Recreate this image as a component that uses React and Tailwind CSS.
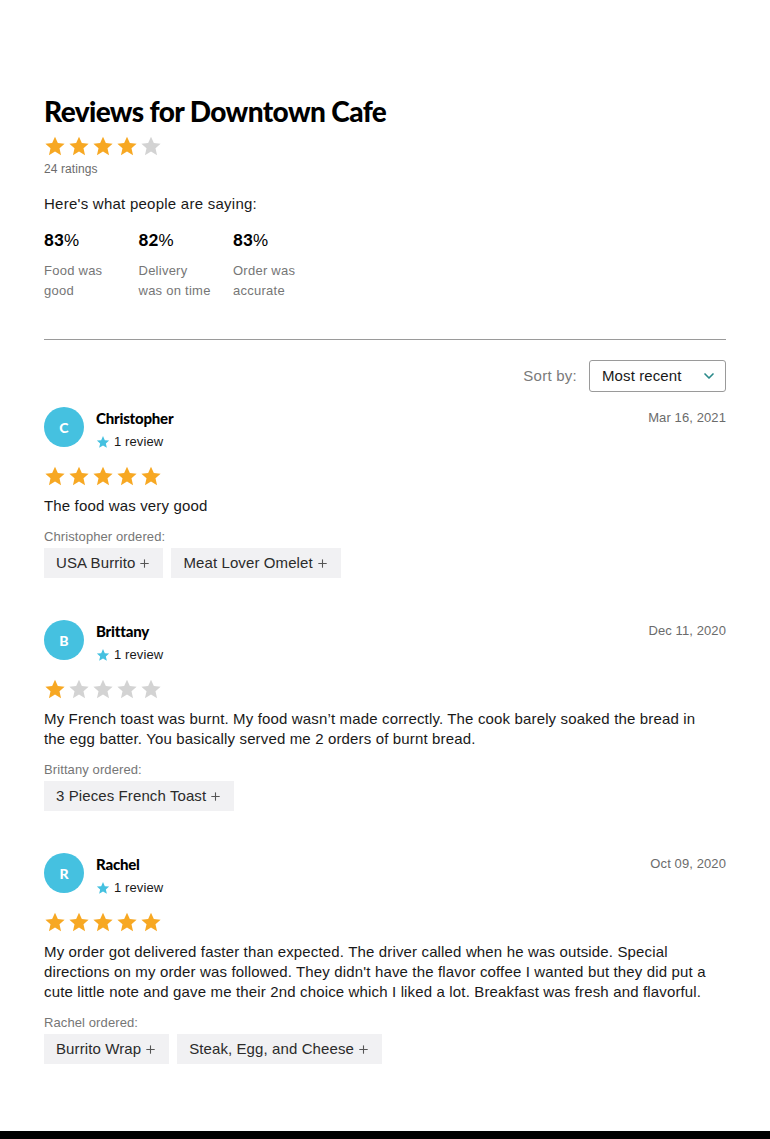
import React from 'react';
import { ChevronDown, Plus } from 'lucide-react';

const reviews = [
  {
    name: 'Christopher',
    date: 'Mar 16, 2021',
    rating: 5,
    text: 'The food was very good',
    items: ['USA Burrito', 'Meat Lover Omelet'],
  },
  {
    name: 'Brittany',
    date: 'Dec 11, 2020',
    rating: 1,
    text: 'My French toast was burnt. My food wasn’t made correctly. The cook barely soaked the bread in the egg batter. You basically served me 2 orders of burnt bread.',
    items: ['3 Pieces French Toast'],
  },
  {
    name: 'Rachel',
    date: 'Oct 09, 2020',
    rating: 5,
    text: "My order got delivered faster than expected. The driver called when he was outside. Special directions on my order was followed. They didn't have the flavor coffee I wanted but they did put a cute little note and gave me their 2nd choice which I liked a lot. Breakfast was fresh and flavorful.",
    items: ['Burrito Wrap', 'Steak, Egg, and Cheese'],
  },
];

const Star = ({ filled, size = 22, color }) => (
  <svg width={size} height={size} viewBox="0 0 24 24">
    <path
      d="M12 1.8l3.1 7 7.4.7-5.6 5 1.7 7.5L12 18.1 5.4 22l1.7-7.5-5.6-5 7.4-.7z"
      fill={color || (filled ? '#f7a823' : '#d3d3d3')}
    />
  </svg>
);

const Stars = ({ value }) => (
  <div className="flex gap-[2px]">
    {[1, 2, 3, 4, 5].map((i) => (
      <Star key={i} filled={i <= value} />
    ))}
  </div>
);

const stats = [
  { pct: '83', label: ['Food was', 'good'] },
  { pct: '82', label: ['Delivery', 'was on time'] },
  { pct: '83', label: ['Order was', 'accurate'] },
];

const heading = { fontFamily: 'Lato, "Liberation Sans", sans-serif' };

export default function App() {
  return (
    <div
      className="h-[1139px] overflow-hidden bg-white flex flex-col tracking-[0.1px]"
      style={{ fontFamily: '"Liberation Sans", Arial, sans-serif' }}
    >
      <div className="flex-1 px-[44px] pt-[94px]">
        {/* Header */}
        <h1 className="text-[28px] leading-[34px] font-black tracking-[-0.6px] text-black" style={heading}>
          Reviews for Downtown Cafe
        </h1>
        <div className="mt-[7px]">
          <Stars value={4} />
        </div>
        <p className="text-[12px] leading-[16px] text-[#6b6b6b] mt-[4px]">24 ratings</p>

        <p className="text-[15px] leading-[20px] text-[#191919] mt-[17px] tracking-[0.25px]">Here's what people are saying:</p>

        <div className="flex mt-[16px]">
          {stats.map((s, i) => (
            <div key={i} className="w-[94.5px]">
              <p className="text-[17px] leading-[20px] text-black">
                <span className="font-black" style={heading}>{s.pct}</span>%
              </p>
              <p className="text-[13px] leading-[20px] text-[#767676] mt-[10px] tracking-[0.25px]">
                {s.label[0]}
                <br />
                {s.label[1]}
              </p>
            </div>
          ))}
        </div>

        <div className="border-t border-[#9a9a9a] mt-[38px]" />

        {/* Sort */}
        <div className="flex justify-end items-center gap-[12px] mt-[20px]">
          <span className="text-[15px] text-[#7a7a7a] tracking-[0.25px]">Sort by:</span>
          <div className="w-[137px] h-[32px] border border-[#9a9a9a] rounded-[3px] flex items-center justify-between pl-[12px] pr-[8px]">
            <span className="text-[15px] text-[#191919]">Most recent</span>
            <ChevronDown size={16} strokeWidth={2.5} className="text-[#2a8a8a]" />
          </div>
        </div>

        {/* Reviews */}
        <div className="mt-[15px] flex flex-col gap-[42px]">
          {reviews.map((r) => (
            <div key={r.name}>
              <div className="flex items-start">
                <div className="w-[40px] h-[40px] rounded-full bg-[#45c1e0] flex items-center justify-center text-white text-[14px] font-black" style={heading}>
                  {r.name[0]}
                </div>
                <div className="ml-[12px] flex-1 h-[40px]">
                  <div className="flex justify-between items-start">
                    <p className="text-[15px] leading-[22px] font-black text-black tracking-[-0.2px]" style={heading}>{r.name}</p>
                    <p className="text-[13px] leading-[22px] text-[#6b6b6b]">{r.date}</p>
                  </div>
                  <div className="flex items-center gap-[4px] mt-[5px]">
                    <Star size={14} color="#45c1e0" />
                    <span className="text-[13px] leading-[16px] text-[#191919]">1 review</span>
                  </div>
                </div>
              </div>
              <div className="mt-[18px]">
                <Stars value={r.rating} />
              </div>
              <p className="text-[15px] leading-[20px] text-[#191919] mt-[9px] pr-[10px] tracking-[0.15px]">{r.text}</p>
              <p className="text-[13px] leading-[16px] text-[#767676] mt-[13px]">{r.name} ordered:</p>
              <div className="flex gap-[8px] mt-[3px]">
                {r.items.map((it) => (
                  <div key={it} className="h-[30px] bg-[#f1f1f3] px-[12px] flex items-center gap-[3px] text-[15px] text-[#2b2b2b]">
                    {it}
                    <Plus size={13} strokeWidth={2} className="text-[#555]" />
                  </div>
                ))}
              </div>
            </div>
          ))}
        </div>
      </div>
      <div className="h-[8px] bg-black shrink-0" />
    </div>
  );
}
